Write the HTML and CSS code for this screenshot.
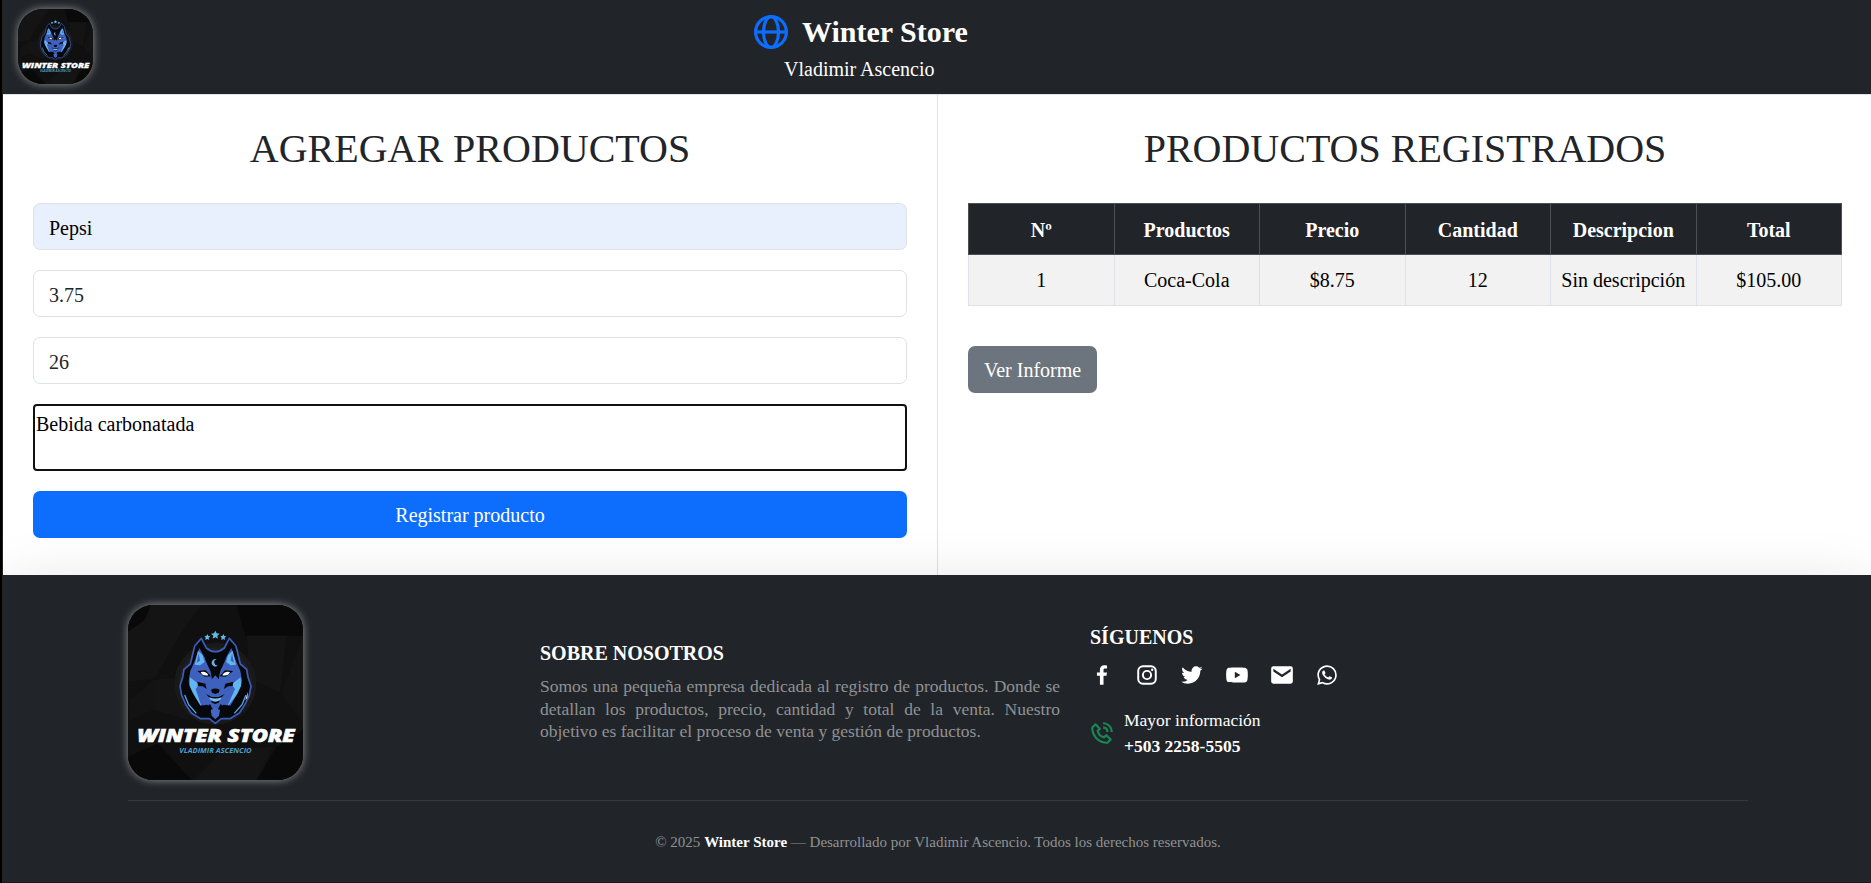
FILE: index.html
```html
<!DOCTYPE html>
<html lang="es">
<head>
<meta charset="utf-8">
<title>Winter Store</title>
<link rel="stylesheet" href="styles.css">
</head>
<body>
<div class="page">
  <header class="topbar">
    <svg class="logo logo-small" viewBox="54 45 525 525"><use href="#logo-art"/></svg>
    <div class="brand">
      <div class="brand-title">
        <svg class="globe" viewBox="0 0 34 34" fill="none" stroke="#0d6efd" stroke-width="3.200"><circle cx="17" cy="17" r="15.400"/><ellipse cx="17" cy="17" rx="7.500" ry="15.400"/><path d="M2 17h30"/></svg>
        <h1>Winter Store</h1>
      </div>
      <p>Vladimir Ascencio</p>
    </div>
  </header>

  <main class="columns">
    <section class="panel panel-form">
      <h2>AGREGAR PRODUCTOS</h2>
      <form class="form">
        <input class="field field-filled" type="text" value="Pepsi">
        <input class="field" type="text" value="3.75">
        <input class="field" type="text" value="26">
        <textarea class="notes">Bebida carbonatada</textarea>
        <button class="btn btn-primary" type="button">Registrar producto</button>
      </form>
    </section>
    <section class="panel">
      <h2>PRODUCTOS REGISTRADOS</h2>
      <table class="table">
        <thead><tr><th>Nº</th><th>Productos</th><th>Precio</th><th>Cantidad</th><th>Descripcion</th><th>Total</th></tr></thead>
        <tbody><tr><td>1</td><td>Coca-Cola</td><td>$8.75</td><td>12</td><td>Sin descripción</td><td>$105.00</td></tr></tbody>
      </table>
      <button class="btn btn-secondary" type="button">Ver Informe</button>
    </section>
  </main>

  <footer class="footer">
    <div class="container">
      <div class="footer-row">
        <div class="footer-logo">
          <svg class="logo logo-large" viewBox="54 45 525 525">
            <g id="logo-art">
              <rect x="54" y="45" width="525" height="525" fill="#101011"/>
              <path fill="#090909" d="M54 45h70l-20 45-50 35zM380 45h199v92H405zM54 500l90-40 100 110H54zM500 470l79-50v150H440z"/>
              <path fill="#141415" d="M124 45h150l-60 80-80 140-80 10V125l50-35zM410 137h120l-20 170-90-40zM130 270l80-10 30 130-110-30zM250 570l90-90 150-10-50 100z"/>
              <path fill="#131314" d="M515 310l64-170v260zM60 330l70-60v90l-70 30z"/>
              <circle cx="316" cy="281" r="123" fill="#19191a"/>
              <circle cx="316" cy="281" r="110" fill="#1e1e1f"/>
              <path fill="#62b9e6" d="M316 122l4 8 9 1-7 6 2 9-8-4-8 4 2-9-7-6 9-1zM292 132l3 6 6 1-5 4 1 7-5-3-6 3 1-7-4-4 6-1zM340 132l3 6 6 1-5 4 1 7-5-3-6 3 1-7-4-4 6-1z"/>
              <path fill="#07080c" stroke="#3c5db8" stroke-width="5" stroke-linejoin="round" d="M274 145L254 168 244 210 241 222 222 238 218 262 210 288 215 316 228 345 244 369 272 386 298 386 316 400 334 386 360 386 388 369 404 345 418 316 423 288 414 262 410 238 391 222 388 210 378 168 358 145 343 174Q316 196 289 174Z"/>
              <path fill="#3f61be" d="M268 174l-14 40-13 28-5 30 6 38 22 38 20 8 16-14 8 15 8 5 8-5 8-15 16 14 20-8 22-38 6-38-5-30-13-28-14-40-20 36-28 26-28-26z"/>
              <path fill="#62b5ee" d="M264 182l-10 42 16 2 14-10-6-20zM368 182l10 42-16 2-14-10 6-20zM240 262l-2 36 37 53-18-54 10-14zM392 262l2 36-43 53 24-54-10-14z"/>
              <path fill="#3f61be" d="M266 190l4 22-10 6zM366 190l-4 22 10 6z"/>
              <path fill="#07080c" d="M282 188Q316 208 350 188L346 210 338 228 331 242 326 268 316 256 306 268 301 242 294 228 286 210zM262 243l25-2 16 18-18 1zM370 243l-25-2-16 18 18 1zM262 275l24 6 4 16-12-8-14-1zM370 275l-24 6-4 16 12-8 14-1zM222 296l20 34 21 27 12-3-26-44-14-30-13-8zM410 296l-20 34-21 27-12-3 26-44 14-30 13-8zM288 312l13 14 5 12 10 4 10-4 5-12 13-14-18 9h-20z"/>
              <path fill="#fff" d="M272 246q17-4 23 10-18 3-23-10M360 246q-17-4-23 10 18 3 23-10M406 330l8-25-2 18z"/>
              <path fill="#6fb0e4" d="M320 208a11 11 0 1 0 4 18 8.500 8.500 0 1 1-4-18"/>
              <path fill="#07080c" d="M303 299q13-7 26 0l-3 9-10 4-10-4z"/>
              <path fill="#77c0ed" d="M297 322q19 7 38 0-4 13-19 13-15 0-19-13z"/>
              <path fill="#07080c" d="M262 348l30-4 10 12-4 20-22-4zM370 348l-30-4-10 12 4 20 22-4z"/>
              <path fill="#4567c4" d="M302 360l14-6 14 6-3 17-11 11-11-11z"/>
              <path fill="none" stroke="#58a9e6" stroke-width="4" d="M224 315l12 29 23 26M408 315l-12 29-23 26"/>
              <text class="logo-name" x="82" y="456" textLength="472" lengthAdjust="spacingAndGlyphs">WINTER STORE</text>
              <text class="logo-owner" x="208" y="489" textLength="217" lengthAdjust="spacingAndGlyphs">VLADIMIR ASCENCIO</text>
            </g>
          </svg>
        </div>
        <div class="about">
          <h3>SOBRE NOSOTROS</h3>
          <p>Somos una pequeña empresa dedicada al registro de productos. Donde se detallan los productos, precio, cantidad y total de la venta. Nuestro objetivo es facilitar el proceso de venta y gestión de productos.</p>
        </div>
        <div class="follow">
          <h3>SÍGUENOS</h3>
          <div class="socials">
            <svg viewBox="0 0 24 24"><path d="M13.397 20.997v-8.196h2.765l.411-3.209h-3.176V7.548c0-.926.258-1.560 1.587-1.560h1.684V3.127A22.336 22.336 0 0 0 14.201 3c-2.444 0-4.122 1.492-4.122 4.231v2.355H7.332v3.209h2.753v8.202h3.312z"/></svg>
            <svg viewBox="0 0 24 24"><rect x="3.900" y="3.900" width="16.200" height="16.200" rx="4.400" fill="none" stroke="#fff" stroke-width="1.800"/><circle cx="12" cy="12" r="3.800" fill="none" stroke="#fff" stroke-width="1.800"/><circle cx="16.800" cy="7.200" r="1.100"/></svg>
            <svg viewBox="0 0 24 24"><path d="M19.633 7.997c.013.175.013.349.013.523 0 5.325-4.053 11.461-11.460 11.461-2.282 0-4.402-.661-6.186-1.809.324.037.636.050.973.050a8.070 8.070 0 0 0 5.001-1.721 4.036 4.036 0 0 1-3.767-2.793c.249.037.499.062.761.062.361 0 .724-.050 1.061-.137a4.027 4.027 0 0 1-3.230-3.953v-.050c.537.299 1.160.486 1.820.511a4.022 4.022 0 0 1-1.796-3.354c0-.748.199-1.434.548-2.032a11.457 11.457 0 0 0 8.306 4.215c-.062-.300-.100-.611-.100-.923a4.026 4.026 0 0 1 4.028-4.028c1.160 0 2.207.486 2.943 1.272a7.957 7.957 0 0 0 2.556-.973 4.020 4.020 0 0 1-1.771 2.220 8.073 8.073 0 0 0 2.319-.624 8.645 8.645 0 0 1-2.019 2.083z"/></svg>
            <svg viewBox="0 0 24 24"><path fill-rule="evenodd" d="M21.593 7.203a2.506 2.506 0 0 0-1.762-1.766C18.265 5.007 12 5 12 5s-6.264-.007-7.831.404a2.560 2.560 0 0 0-1.766 1.778c-.413 1.566-.417 4.814-.417 4.814s-.004 3.264.406 4.814c.230.857.905 1.534 1.763 1.765 1.582.430 7.830.437 7.830.437s6.265.007 7.831-.403a2.515 2.515 0 0 0 1.767-1.763c.414-1.565.417-4.812.417-4.812s.020-3.265-.407-4.831zM9.996 15.005l.005-6 5.207 3.005z"/></svg>
            <svg viewBox="0 0 24 24"><path fill-rule="evenodd" d="M20 4H4a2 2 0 0 0-2 2v12a2 2 0 0 0 2 2h16a2 2 0 0 0 2-2V6a2 2 0 0 0-2-2zm0 4.700-8 5.334L4 8.700V6.297l8 5.333 8-5.333z"/></svg>
            <svg viewBox="0 0 24 24"><path fill-rule="evenodd" d="M18.403 5.633A8.919 8.919 0 0 0 12.053 3c-4.948 0-8.976 4.027-8.978 8.977 0 1.582.413 3.126 1.198 4.488L3 21.116l4.759-1.249a8.981 8.981 0 0 0 4.290 1.093h.004c4.947 0 8.975-4.027 8.977-8.977a8.926 8.926 0 0 0-2.627-6.350m-6.350 13.812h-.003a7.446 7.446 0 0 1-3.798-1.041l-.272-.162-2.824.741.753-2.753-.177-.282a7.448 7.448 0 0 1-1.141-3.971c.002-4.114 3.349-7.461 7.465-7.461a7.413 7.413 0 0 1 5.275 2.188 7.420 7.420 0 0 1 2.183 5.279c-.002 4.114-3.349 7.462-7.461 7.462m4.093-5.589c-.225-.113-1.327-.655-1.533-.730-.205-.075-.354-.112-.504.112s-.580.729-.711.879-.262.168-.486.056-.947-.349-1.804-1.113c-.667-.595-1.117-1.329-1.248-1.554s-.014-.346.099-.458c.101-.100.224-.262.336-.393.112-.131.149-.224.224-.374s.038-.281-.019-.393c-.056-.113-.505-1.217-.692-1.666-.181-.435-.366-.377-.504-.383a9.650 9.650 0 0 0-.429-.008.826.826 0 0 0-.599.280c-.206.225-.785.767-.785 1.871s.804 2.171.916 2.321c.112.150 1.582 2.415 3.832 3.387.536.231.954.369 1.279.473.537.171 1.026.146 1.413.089.431-.064 1.327-.542 1.514-1.066.187-.524.187-.973.131-1.067-.056-.094-.207-.151-.430-.263"/></svg>
          </div>
          <div class="contact">
            <svg class="phone" viewBox="0 0 24 24"><path d="M16.570 22a2 2 0 0 0 1.430-.590l2.710-2.710a1 1 0 0 0 0-1.410l-4-4a1 1 0 0 0-1.410 0l-1.600 1.590a7.550 7.550 0 0 1-3-1.590 7.620 7.620 0 0 1-1.590-3l1.590-1.600a1 1 0 0 0 0-1.410l-4-4a1 1 0 0 0-1.410 0L2.580 6A2 2 0 0 0 2 7.430 15.280 15.280 0 0 0 6.300 17.700 15.280 15.280 0 0 0 16.570 22zM6 5.410 8.590 8 7.300 9.290a1 1 0 0 0-.300.910 10.120 10.120 0 0 0 2.300 4.500 10.080 10.080 0 0 0 4.500 2.300 1 1 0 0 0 .910-.270L16 15.410 18.590 18l-2 2a13.280 13.280 0 0 1-8.870-3.710A13.280 13.280 0 0 1 4 7.410z" fill-rule="evenodd"/><path d="M20 11h2a8.810 8.810 0 0 0-9-9v2a6.770 6.770 0 0 1 7 7zM13 8c2.100 0 3 .900 3 3h2c0-3.220-1.780-5-5-5z"/></svg>
            <p>Mayor información<br><b>+503 2258-5505</b></p>
          </div>
        </div>
      </div>
      <p class="copyright">© 2025 <b>Winter Store</b> — Desarrollado por Vladimir Ascencio. Todos los derechos reservados.</p>
    </div>
  </footer>
</div>
</body>
</html>
```
FILE: styles.css
```css
* { box-sizing: border-box; }
body {
  margin: 0;
  background: #000;
  font: 20px/30px "Liberation Serif", "Times New Roman", serif;
  color: #212529;
}
h1, h2, h3, p { margin: 0; }
.page {
  margin-left: 2px;
  border-left: 1px solid #26231d;
  height: 883px;
  overflow: hidden;
  background: #fff;
}

.logo {
  display: block;
  border-radius: 25px;
  box-shadow: 0 0 8px rgba(255, 255, 255, .5);
}
.logo-small { width: 75px; height: 75px; }
.logo-large { width: 175px; height: 175px; }
.logo-name { font: italic 900 54px "Open Sans", "Noto Sans", sans-serif; fill: #fff; stroke: #fff; stroke-width: 2; }
.logo-owner { font: italic 700 21px "Open Sans", "Noto Sans", sans-serif; fill: #4f9fc6; }

.topbar {
  display: flex;
  height: 95px;
  padding: 9px 15px 0;
  background: #212529;
  color: #fff;
  border-bottom: 1px solid #dee2e6;
}
.brand { margin-left: 661px; }
.brand-title { display: flex; align-items: center; gap: 14px; height: 45px; }
.brand h1 { font-size: 30px; line-height: 45px; }
.brand p { padding-left: 30px; line-height: 30px; }
.globe { width: 34px; height: 34px; }

.columns { display: grid; grid-template-columns: 935px 1fr; height: 480px; }
.panel { padding: 30px 29px 0 30px; }
.panel-form { padding-right: 30px; border-right: 1px solid #dee2e6; }
.panel h2 { font-size: 40px; font-weight: 400; line-height: 48px; text-align: center; margin-bottom: 30px; }
.form { display: flex; flex-direction: column; gap: 20px; }
.field {
  height: 47px;
  padding: 9px 15px 5px;
  border: 1px solid #dee2e6;
  border-radius: 7px;
  background: #fff;
  font: inherit;
  color: #212529;
}
.field-filled { background: #e8f0fe; color: #000; }
.notes {
  height: 67px;
  padding: 3px 1px 2px;
  border: 2px solid #101010;
  border-radius: 4px;
  font: inherit;
  color: #000;
  resize: none;
}
.btn {
  height: 47px;
  padding: 1px 16px 0;
  border: 0;
  border-radius: 7px;
  font: inherit;
  color: #fff;
}
.btn-primary { background: #0d6efd; }
.btn-secondary { margin-top: 40px; background: #6c757d; }
.panel .table { width: 874px; border-collapse: collapse; table-layout: fixed; text-align: center; color: #000; }
.table th, .table td { height: 51px; padding: 0; border: 1px solid #dee2e6; background: #f2f2f2; }
.table th { padding-top: 1px; background: #212529; color: #fff; border-color: #4d5154; }

.footer {
  position: relative;
  height: 308px;
  background: #212529;
  color: #fff;
  box-shadow: 0 20px 60px rgba(0, 0, 0, .175);
  border-bottom: 1px solid #17191c;
}
.container { width: 1620px; margin-left: 125px; padding-top: 30px; }
.footer-row { display: grid; grid-template-columns: 412px 550px 1fr; height: 196px; border-bottom: 1px solid #373b3e; }
.footer h3 { font-size: 20px; line-height: 24px; }
.about { width: 520px; padding-top: 36px; }
.about p { margin-top: 10px; font-size: 17.500px; line-height: 22.500px; text-align: justify; color: #909294; }
.follow { padding-top: 20px; }
.socials { display: flex; gap: 19px; margin: 13px 0 0 -1px; }
.socials svg { width: 26px; height: 26px; fill: #fff; }
.contact { display: flex; align-items: center; gap: 9px; margin: 19px 0 0 -1px; }
.contact p { font-size: 17.500px; line-height: 26px; }
.phone { width: 26px; height: 26px; fill: #198754; }
.copyright { margin-top: 26px; font-size: 15px; line-height: 30px; text-align: center; color: #909294; }
.copyright b { color: #fff; }
```
